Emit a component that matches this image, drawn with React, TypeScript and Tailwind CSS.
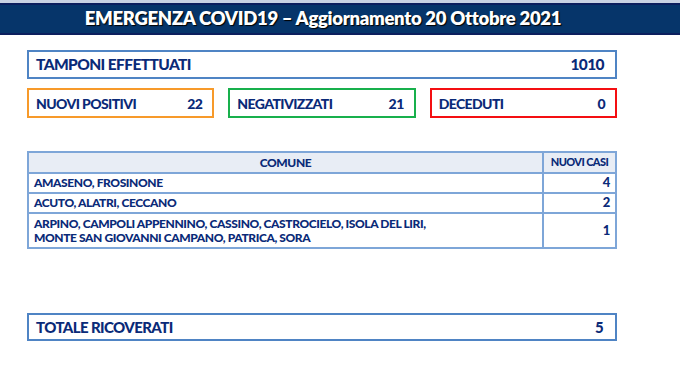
import React from "react";

interface stat {
  label: string;
  value: number;
  border: string;
}

interface row {
  comuni: string[];
  casi: number;
  tall?: boolean;
}

const stats: stat[] = [
  { label: "NUOVI POSITIVI", value: 22, border: "border-[#f79a2a]" },
  { label: "NEGATIVIZZATI", value: 21, border: "border-[#18b04c]" },
  { label: "DECEDUTI", value: 0, border: "border-[#f40f12]" },
];

const rows: row[] = [
  { comuni: ["AMASENO, FROSINONE"], casi: 4 },
  { comuni: ["ACUTO, ALATRI, CECCANO"], casi: 2 },
  {
    comuni: [
      "ARPINO, CAMPOLI APPENNINO, CASSINO, CASTROCIELO, ISOLA DEL LIRI,",
      "MONTE SAN GIOVANNI CAMPANO, PATRICA, SORA",
    ],
    casi: 1,
    tall: true,
  },
];

function App() {
  return (
    <div className="w-[680px] h-[383px] bg-white font-['Lato',sans-serif] text-[#0a2a78] overflow-hidden">
      <div className="h-[3px] bg-[#c9d3e3]" />
      <div className="h-[32px] bg-[#06356a] border-y-2 border-[#0c1f5e] flex items-center justify-center pr-[34px]">
        <p className="text-white font-extrabold text-[18.5px] tracking-[-0.3px] [text-shadow:1px_1px_1px_#000]">
          EMERGENZA COVID19 – Aggiornamento 20 Ottobre 2021
        </p>
      </div>

      <div className="ml-[27px] w-[590px] flex flex-col">
        <div className="mt-[15px] h-[29px] border-2 border-[#4f84c4] flex items-center justify-between pl-[7px] pr-[11px] font-black text-[15.5px] tracking-[-0.6px]">
          <span>TAMPONI EFFETTUATI</span>
          <span>1010</span>
        </div>

        <div className="mt-[9px] flex gap-[14px]">
          {stats.map((s) => (
            <div
              key={s.label}
              className={`flex-1 h-[30px] border-2 ${s.border} flex items-center justify-between pl-[7px] pr-[10px] font-black text-[14px] tracking-[-0.6px]`}
            >
              <span>{s.label}</span>
              <span>{s.value}</span>
            </div>
          ))}
        </div>

        <div className="mt-[33px] border-2 border-[#7ea6d8] font-black text-[12px] tracking-[-0.4px]">
          <div className="h-[21px] flex bg-[#e8edf5] border-b-2 border-[#7ea6d8]">
            <div className="flex-1 flex items-center justify-center">COMUNE</div>
            <div className="w-[73px] border-l-2 border-[#7ea6d8] flex items-center justify-center text-[11px] tracking-[-0.6px]">
              NUOVI CASI
            </div>
          </div>
          {rows.map((r, i) => (
            <div
              key={i}
              className={`flex ${r.tall ? "h-[33px]" : "h-[20px]"} ${i < rows.length - 1 ? "border-b-2 border-[#7ea6d8]" : ""}`}
            >
              <div className="flex-1 flex flex-col justify-center pl-[5px] leading-[14px]">
                {r.comuni.map((c) => (
                  <span key={c}>{c}</span>
                ))}
              </div>
              <div className="w-[73px] border-l-2 border-[#7ea6d8] flex items-center justify-end pr-[5px] text-[13px]">
                {r.casi}
              </div>
            </div>
          ))}
        </div>

        <div className="mt-[64px] h-[28px] border-2 border-[#4f84c4] flex items-center justify-between pl-[7px] pr-[12px] font-black text-[15px] tracking-[-0.6px]">
          <span>TOTALE RICOVERATI</span>
          <span>5</span>
        </div>
      </div>
    </div>
  );
}

export default App;
